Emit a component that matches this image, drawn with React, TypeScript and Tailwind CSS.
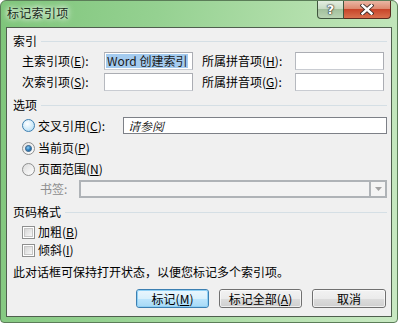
import React from "react"

const cjk = "font-['Noto_Sans_CJK_SC','Noto_Sans_CJK_JP',sans-serif]"

function Key({ k }: { k: string }) {
  return (
    <>
      (<span className="underline underline-offset-[1px]">{k}</span>)
    </>
  )
}

function SectionTitle({ title, className = "" }: { title: string; className?: string }) {
  return (
    <div className={`flex h-[14px] items-center gap-[4px] ${className}`}>
      <span className="leading-[14px]">{title}</span>
      <div className="h-px flex-1 bg-[#d5dfe5]" />
    </div>
  )
}

function TextBox({ className = "", children }: { className?: string; children?: React.ReactNode }) {
  return (
    <div
      className={`flex h-[18px] items-center border border-[#abadb3] border-l-[#b6b9bf] border-b-[#c9ccd2] bg-white px-[1px] ${className}`}
    >
      {children}
    </div>
  )
}

function Radio({ state }: { state: "hover" | "checked" | "normal" }) {
  if (state === "hover") {
    return (
      <div className="flex h-[13px] w-[13px] items-center justify-center rounded-full border border-[#3c7fb1] bg-[radial-gradient(circle_at_40%_35%,#ffffff,#cfeaf9_55%,#a7d4f1)]" />
    )
  }
  if (state === "checked") {
    return (
      <div className="flex h-[13px] w-[13px] items-center justify-center rounded-full border border-[#8e8f8f] bg-[linear-gradient(135deg,#e2e2e2,#ffffff)]">
        <div className="h-[5px] w-[5px] rounded-full bg-[radial-gradient(circle_at_40%_35%,#8fd0f7,#1a6fb3_60%,#0b4a84)] outline outline-[1px] outline-[#1d5281]" />
      </div>
    )
  }
  return (
    <div className="h-[13px] w-[13px] rounded-full border border-[#8e8f8f] bg-[linear-gradient(135deg,#dcdcdc,#ffffff)]" />
  )
}

function CheckBox() {
  return (
    <div className="flex h-[13px] w-[13px] items-center justify-center border border-[#8e8f8f] bg-white">
      <div className="h-[9px] w-[9px] border border-[#c6c6c6] bg-[linear-gradient(135deg,#d6d6d6,#f7f7f7)]" />
    </div>
  )
}

function Button({
  children,
  width,
  focused = false,
}: {
  children: React.ReactNode
  width: string
  focused?: boolean
}) {
  return (
    <div
      className={`flex h-[19px] ${width} items-center justify-center rounded-[3px] border ${
        focused
          ? "border-[#3c7fb1] bg-[linear-gradient(#eaf6fd_0%,#d9f0fc_50%,#bee6fd_50%,#a7d9f5_100%)]"
          : "border-[#707070] bg-[linear-gradient(#f2f2f2_0%,#ebebeb_50%,#dddddd_50%,#cfcfcf_100%)]"
      }`}
    >
      <div
        className={`flex h-full w-full items-center justify-center rounded-[2px] border ${
          focused ? "border-[#8fd0f5]" : "border-[#fcfcfc]/70"
        } leading-[14px]`}
      >
        {children}
      </div>
    </div>
  )
}

export default function App() {
  return (
    <div
      className={`flex h-[323px] w-[398px] flex-col overflow-hidden rounded-t-[6px] rounded-b-[4px] border border-[#5b7d58] bg-[linear-gradient(100deg,#7ec57a_0%,#95d191_35%,#b5e0ae_70%,#c8e9c2_100%)] text-[12px] text-black ${cjk}`}
    >
      {/* Title bar */}
      <div className="flex h-[26px] shrink-0 items-start">
        <div className="pl-[6px] pt-[4px] text-[12px] leading-[16px] tracking-[0.3px] text-[#1b2b1b] [text-shadow:0_0_5px_#ffffff,0_0_8px_#ffffff]">
          标记索引项
        </div>
        <div className="ml-auto mr-[6px] flex h-[18px]">
          <div className="flex w-[27px] items-center justify-center rounded-bl-[4px] border border-t-0 border-[#3f553d] bg-[linear-gradient(#e4eee1_0%,#c9dcc5_45%,#a3c09d_50%,#b9d4b3_100%)] text-[13px] font-bold leading-none text-white [text-shadow:0_0_1px_#2a2a2a,0_0_1px_#2a2a2a,0_0_2px_#2a2a2a] font-['DejaVu_Sans',sans-serif]">
            ?
          </div>
          <div className="flex w-[47px] items-center justify-center rounded-br-[4px] border border-l-0 border-t-0 border-[#5a2a20] bg-[linear-gradient(#eab6a4_0%,#de8a70_45%,#c8452a_50%,#d9704e_100%)]">
            <svg width="14" height="11" viewBox="0 0 14 11">
              <path d="M2.5 1.5 L11.5 9.5 M11.5 1.5 L2.5 9.5" stroke="#3a2a26" strokeWidth="4.2" strokeLinecap="square" />
              <path d="M2.5 1.5 L11.5 9.5 M11.5 1.5 L2.5 9.5" stroke="#ffffff" strokeWidth="2.4" strokeLinecap="square" />
            </svg>
          </div>
        </div>
      </div>

      {/* Client area */}
      <div className="mx-[5px] mb-[5px] flex flex-1 flex-col border border-[#4f5f4e] bg-[#f0f0f0] pl-[6px] pr-[4px] pt-[6px]">
        <SectionTitle title="索引" />

        <div className="ml-[9px] mt-[4px] flex h-[18px] items-center">
          <span className="w-[82px] leading-[16px]">
            主索引项<Key k="E" />:
          </span>
          <TextBox className="w-[89px]">
            <span className="bg-[#a4cbef] px-[1px] leading-[14px] text-[#1a1a1a]">Word 创建索引</span>
          </TextBox>
          <span className="ml-[9px] w-[93px] leading-[16px]">
            所属拼音项<Key k="H" />:
          </span>
          <TextBox className="w-[89px]" />
        </div>

        <div className="ml-[9px] mt-[3px] flex h-[18px] items-center">
          <span className="w-[82px] leading-[16px]">
            次索引项<Key k="S" />:
          </span>
          <TextBox className="w-[89px]" />
          <span className="ml-[9px] w-[93px] leading-[16px]">
            所属拼音项<Key k="G" />:
          </span>
          <TextBox className="w-[89px]" />
        </div>

        <SectionTitle title="选项" className="mt-[7px]" />

        <div className="ml-[9px] mt-[5px] flex h-[17px] items-center">
          <Radio state="hover" />
          <span className="ml-[3px] w-[85px] leading-[16px]">
            交叉引用<Key k="C" />:
          </span>
          <div className="flex h-[17px] flex-1 items-center border border-[#7d8087] bg-white pl-[4px]">
            <span className="italic leading-[14px] font-['Noto_Serif_CJK_SC','Noto_Sans_CJK_SC',serif]">请参阅</span>
          </div>
        </div>

        <div className="ml-[9px] mt-[6px] flex h-[16px] items-center">
          <Radio state="checked" />
          <span className="ml-[3px] leading-[16px]">
            当前页<Key k="P" />
          </span>
        </div>

        <div className="ml-[9px] mt-[5px] flex h-[16px] items-center">
          <Radio state="normal" />
          <span className="ml-[3px] leading-[16px]">
            页面范围<Key k="N" />
          </span>
        </div>

        <div className="ml-[27px] mt-[3px] flex h-[18px] items-center">
          <span className="w-[39px] leading-[16px] text-[#8d8d8d]">书签:</span>
          <div className="flex h-[18px] flex-1 border-2 border-[#afb3b7] bg-[#f0f0f0]">
            <div className="flex-1 border-r-0 bg-[#f3f3f3]" />
            <div className="flex w-[16px] items-center justify-center border-l-2 border-[#afb3b7] bg-[#f4f4f4]">
              <svg width="7" height="4" viewBox="0 0 7 4">
                <path d="M0 0 H7 L3.5 4 Z" fill="#a2a2a2" />
              </svg>
            </div>
          </div>
        </div>

        <SectionTitle title="页码格式" className="mt-[7px]" />

        <div className="ml-[9px] mt-[5px] flex h-[16px] items-center">
          <CheckBox />
          <span className="ml-[3px] leading-[16px]">
            加粗<Key k="B" />
          </span>
        </div>

        <div className="ml-[9px] mt-[2px] flex h-[16px] items-center">
          <CheckBox />
          <span className="ml-[3px] leading-[16px]">
            倾斜<Key k="I" />
          </span>
        </div>

        <div className="mt-[7px] h-[14px] leading-[14px]">此对话框可保持打开状态，以便您标记多个索引项。</div>

        <div className="mt-[10px] flex justify-end gap-[10px] pr-[1px]">
          <Button width="w-[73px]" focused>
            标记<Key k="M" />
          </Button>
          <Button width="w-[83px]">
            标记全部<Key k="A" />
          </Button>
          <Button width="w-[74px]">取消</Button>
        </div>
      </div>
    </div>
  )
}
